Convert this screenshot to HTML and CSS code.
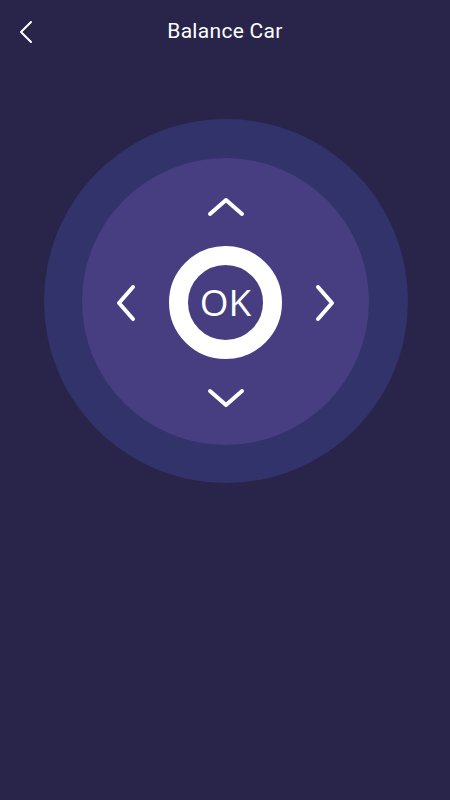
FILE: index.html
```html
<!DOCTYPE html>
<html>
<head>
<meta charset="utf-8">
<link rel="stylesheet" href="styles.css">
</head>
<body>
<div class="app">
  <header class="topbar">
    <svg class="back" width="14" height="24" viewBox="0 0 14 24"><path d="M12 2 L2 12 L12 22" fill="none" stroke="#fff" stroke-width="2" stroke-linecap="round" stroke-linejoin="round"/></svg>
    <h1 class="title">Balance Car</h1>
  </header>
  <main class="main">
    <div class="outer">
      <div class="inner">
        <div class="pad">
          <div class="cell up"><svg width="38" height="20" viewBox="0 0 38 20"><path d="M3 17 L19 3 L35 17" fill="none" stroke="#fff" stroke-width="4" stroke-linecap="round" stroke-linejoin="round"/></svg></div>
          <div class="cell left"><svg width="20" height="38" viewBox="0 0 20 38"><path d="M17 3 L3 19 L17 35" fill="none" stroke="#fff" stroke-width="4" stroke-linecap="round" stroke-linejoin="round"/></svg></div>
          <div class="cell ok"><div class="ring"><span class="oktext">OK</span></div></div>
          <div class="cell right"><svg width="20" height="38" viewBox="0 0 20 38"><path d="M3 3 L17 19 L3 35" fill="none" stroke="#fff" stroke-width="4" stroke-linecap="round" stroke-linejoin="round"/></svg></div>
          <div class="cell down"><svg width="38" height="20" viewBox="0 0 38 20"><path d="M3 3 L19 17 L35 3" fill="none" stroke="#fff" stroke-width="4" stroke-linecap="round" stroke-linejoin="round"/></svg></div>
        </div>
      </div>
    </div>
  </main>
</div>
</body>
</html>
```

FILE: styles.css
```css
* { box-sizing: border-box; }
html, body { margin: 0; padding: 0; }
body {
  background: #29244a;
  font-family: Roboto, "Liberation Sans", sans-serif;
  color: #fff;
}
.app {
  width: 450px;
  height: 800px;
  display: flex;
  flex-direction: column;
}
.topbar {
  height: 64px;
  display: flex;
  align-items: center;
  justify-content: center;
  position: relative;
  padding-bottom: 2px;
}
.back {
  position: absolute;
  left: 19px;
  top: 20px;
}
.title {
  margin: 0;
  font-size: 21px;
  font-weight: 400;
  letter-spacing: 0.3px;
  margin-top: -1px;
}
.main {
  display: flex;
  justify-content: center;
  padding-top: 55px;
  padding-left: 1px;
}
.outer {
  width: 364px;
  height: 364px;
  border-radius: 50%;
  background: #32336a;
  display: flex;
  align-items: center;
  justify-content: center;
}
.inner {
  width: 287px;
  height: 287px;
  border-radius: 50%;
  background: #463e80;
  display: flex;
  align-items: center;
  justify-content: center;
}
.pad {
  display: grid;
  grid-template-columns: 20px 113px 20px;
  grid-template-rows: 20px 113px 20px;
  column-gap: 33px;
  row-gap: 29px;
  margin-top: 3px;
}
.cell { display: flex; align-items: center; justify-content: center; }
.up { grid-column: 2; grid-row: 1; }
.left { grid-column: 1; grid-row: 2; }
.ok { grid-column: 2; grid-row: 2; }
.right { grid-column: 3; grid-row: 2; }
.down { grid-column: 2; grid-row: 3; }
.ring {
  width: 113px;
  height: 113px;
  border-radius: 50%;
  border: 19px solid #fff;
  background: #463e80;
  display: flex;
  align-items: center;
  justify-content: center;
}
.oktext {
  font-family: "Open Sans", sans-serif;
  font-weight: 400;
  font-size: 37px;
  line-height: 1;
  margin-top: -2px;
}
```
